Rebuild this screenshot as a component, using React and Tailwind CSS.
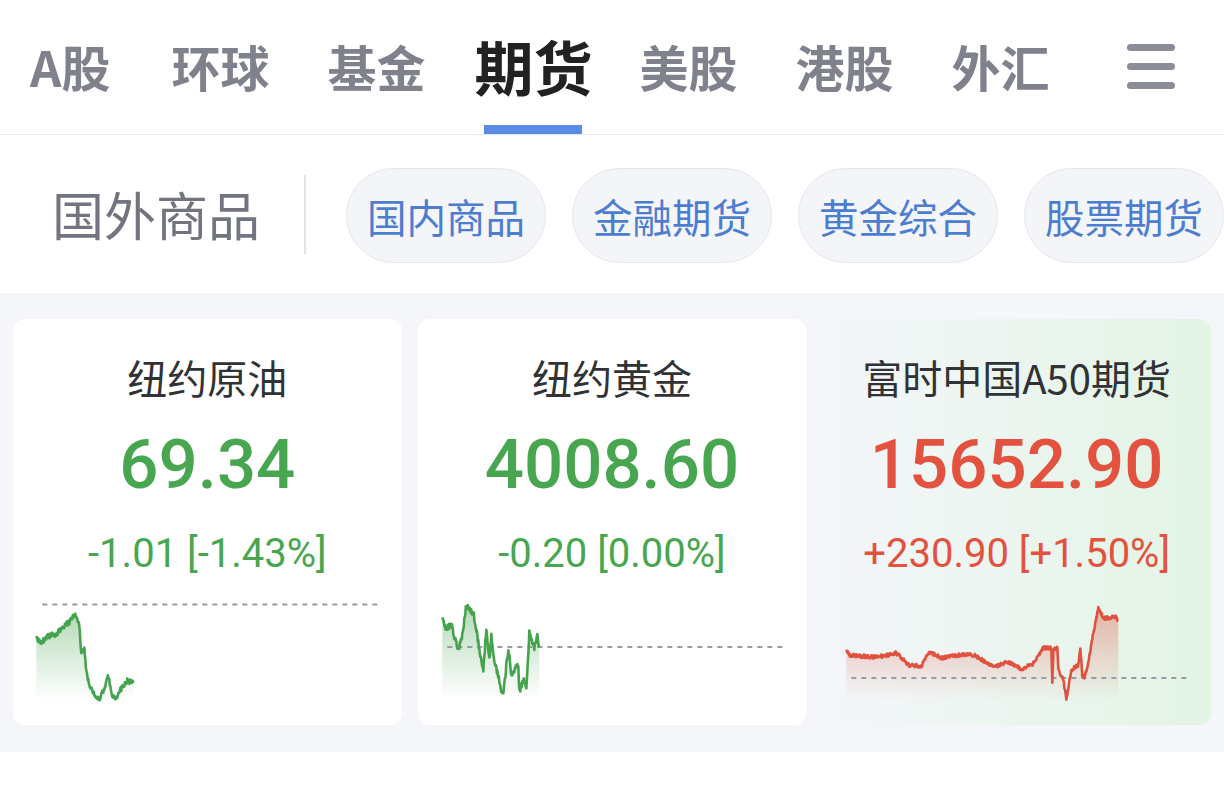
import React from 'react';

const cjk = { fontFamily: '"Noto Sans CJK SC", "Noto Sans", sans-serif' };
const num = { fontFamily: 'Roboto, "Noto Sans CJK SC", sans-serif' };

const tabs = ['A股', '环球', '基金', '期货', '美股', '港股', '外汇'];
const pills = ['国内商品', '金融期货', '黄金综合', '股票期货'];

// pseudo noise so the chart line looks jittery but stays the same every render
const jitter = (i, seed) => {
    const v = Math.sin(i * 91.7 + seed) * 10000;
    return (v - Math.floor(v)) * 2 - 1;
};

// keys are page coords, turned into card-relative coords for the svg
const buildLine = (keys, cardX, seed, amp) => {
    const pts = [];
    let i = 0;
    for (let k = 0; k < keys.length - 1; k++) {
        const [x0, y0] = keys[k];
        const [x1, y1] = keys[k + 1];
        const steps = Math.max(1, Math.round((x1 - x0) * 2));
        for (let s = 0; s < steps; s++) {
            const t = s / steps;
            const x = x0 + (x1 - x0) * t;
            const y = y0 + (y1 - y0) * t + jitter(i++, seed) * amp;
            pts.push([x - cardX, y - 595]);
        }
    }
    const last = keys[keys.length - 1];
    pts.push([last[0] - cardX, last[1] - 595]);
    return pts;
};

const cards = [
    {
        id: 'oil',
        title: '纽约原油',
        price: '69.34',
        change: '-1.01 [-1.43%]',
        color: '#45a34d',
        textColor: 'text-[#47a64f]',
        bg: 'bg-white',
        dash: [29, 364, 9.5],
        keys: buildLine([
            [36, 638], [40, 643], [48, 636], [56, 634], [64, 626], [70, 621], [75, 613],
            [79, 625], [81, 655], [84, 648], [86, 673], [90, 688], [95, 695], [99, 700],
            [104, 688], [108, 676], [111, 694], [115, 700], [120, 690], [127, 681], [133, 683],
        ], 13, 1.3, 2.6),
    },
    {
        id: 'gold',
        title: '纽约黄金',
        price: '4008.60',
        change: '-0.20 [0.00%]',
        color: '#45a34d',
        textColor: 'text-[#47a64f]',
        bg: 'bg-white',
        dash: [29, 365, 52],
        keys: buildLine([
            [441, 619], [445, 628], [450, 625], [454, 640], [457, 650], [461, 635], [465, 605],
            [469, 612], [472, 612], [475, 630], [479, 655], [482, 670], [485, 628], [488, 660],
            [490, 635], [493, 663], [497, 675], [500, 690], [502, 695], [505, 665], [507, 648],
            [510, 677], [514, 668], [517, 665], [518, 692], [522, 680], [525, 687], [528, 633],
            [533, 647], [536, 637], [538, 647],
        ], 417, 4.1, 3),
    },
    {
        id: 'a50',
        title: '富时中国A50期货',
        price: '15652.90',
        change: '+230.90 [+1.50%]',
        color: '#e0523f',
        textColor: 'text-[#e2523f]',
        bg: 'bg-linear-to-r from-[#f4f6fa] to-[#e2f4e4]',
        dash: [29, 364, 83],
        keys: buildLine([
            [845, 649], [848, 655], [870, 657], [883, 656], [895, 653], [908, 665], [920, 666],
            [928, 652], [940, 658], [957, 655], [973, 655], [992, 667], [1007, 662], [1020, 669],
            [1033, 663], [1042, 648], [1050, 648], [1051, 682], [1052, 650], [1056, 648],
            [1057, 670], [1062, 680], [1065, 700], [1070, 670], [1077, 665], [1079, 648],
            [1081, 675], [1083, 677], [1087, 663], [1092, 633], [1097, 608], [1102, 618],
            [1110, 618], [1113, 616], [1117, 620],
        ], 821, 7.7, 1.8),
    },
];

const Chart = ({ card }) => {
    const pts = card.keys;
    const line = pts.map(([x, y]) => `${x.toFixed(1)},${y.toFixed(1)}`).join(' ');
    const first = pts[0];
    const last = pts[pts.length - 1];
    const area = `${first[0].toFixed(1)},105 ${line} ${last[0].toFixed(1)},105`;
    const [dx0, dx1, dy] = card.dash;
    return (
        <svg viewBox="0 0 388 110" className="block w-full h-[110px]">
            <defs>
                <linearGradient id={`fill-${card.id}`} x1="0" y1="0" x2="0" y2="1">
                    <stop offset="0%" stopColor={card.color} stopOpacity="0.4" />
                    <stop offset="100%" stopColor={card.color} stopOpacity="0" />
                </linearGradient>
            </defs>
            <polygon points={area} fill={`url(#fill-${card.id})`} />
            <line x1={dx0} y1={dy} x2={dx1} y2={dy} stroke="#9a9ca3" strokeWidth="1.8" strokeDasharray="5 5" />
            <polyline points={line} fill="none" stroke={card.color} strokeWidth="2.6" strokeLinejoin="round" />
        </svg>
    );
};

const Card = ({ card }) => (
    <div className={`${card.bg} rounded-xl flex flex-col items-center h-[406px] pt-[36px]`}>
        <div className="text-[40px] leading-[44px] text-[#303236]" style={cjk}>{card.title}</div>
        <div className={`mt-[30px] text-[69px] leading-[72px] font-medium ${card.textColor}`} style={num}>{card.price}</div>
        <div className={`mt-[31px] text-[40px] leading-[44px] ${card.textColor}`} style={num}>{card.change}</div>
        <div className="mt-[19px] w-full">
            <Chart card={card} />
        </div>
    </div>
);

export default function App() {
    return (
        <div className="w-[1224px] h-[787px] bg-white overflow-hidden" style={cjk}>
            {/* top tabs */}
            <div className="h-[135px] border-b border-[#e6e8ec] flex items-stretch pl-[30px] relative">
                <div className="flex items-stretch gap-[58px]">
                    {tabs.map((t, i) => {
                        const active = t === '期货';
                        return (
                            <div key={t} className={`relative flex items-center pb-[3px] ${active ? '-ml-[9px] -mr-[11px]' : ''} ${i === 0 ? 'mr-[3px]' : ''}`}>
                                <span className={active ? 'text-[59px] font-bold text-[#222222] leading-none' : 'text-[49px] font-bold text-[#7f828d] leading-none'}>{t}</span>
                                {active && (
                                    <span className="absolute bottom-0 left-1/2 -translate-x-1/2 w-[98px] h-[9px] bg-[#5a8ce6]" />
                                )}
                            </div>
                        );
                    })}
                </div>
                <div className="ml-auto flex items-center pr-[49px] pb-[2px]">
                    <div className="flex flex-col gap-[12px]">
                        <span className="block w-[48px] h-[7px] rounded-full bg-[#8a8d98]" />
                        <span className="block w-[48px] h-[7px] rounded-full bg-[#8a8d98]" />
                        <span className="block w-[48px] h-[7px] rounded-full bg-[#8a8d98]" />
                    </div>
                </div>
            </div>

            {/* sub categories */}
            <div className="h-[158px] flex items-center pl-[52px] whitespace-nowrap">
                <span className="text-[52px] text-[#72757f] leading-none">国外商品</span>
                <span className="ml-[44px] w-[2px] h-[79px] bg-[#dfe2e6]" />
                <div className="ml-[40px] flex gap-[26px] pt-[3px]">
                    {pills.map(p => (
                        <div key={p} className="shrink-0 w-[200px] h-[95px] rounded-full bg-[#f3f5f9] border border-[#e3e6ec] flex items-center justify-center text-[39.5px] text-[#4d7dd0]">
                            {p}
                        </div>
                    ))}
                </div>
            </div>

            {/* quote cards */}
            <div className="bg-[#f4f6fa] px-[13px] pt-[26px] pb-[27px] grid grid-cols-3 gap-4">
                {cards.map(c => <Card key={c.id} card={c} />)}
            </div>
        </div>
    );
}
